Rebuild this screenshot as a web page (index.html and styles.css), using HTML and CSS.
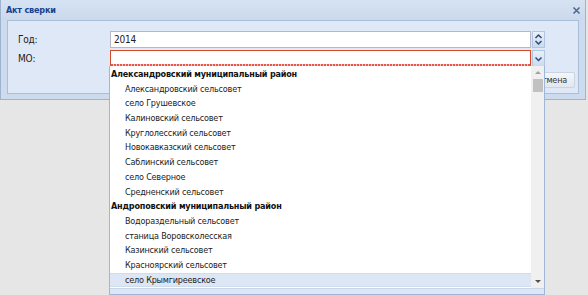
FILE: index.html
```html
<!DOCTYPE html>
<html>
<head>
<meta charset="utf-8">
<link rel="stylesheet" href="styles.css">
</head>
<body>
<div class="window">
  <div class="titlebar">
    <span class="title">Акт сверки</span>
    <svg class="close" width="9" height="9" viewBox="0 0 9 9"><path d="M1.5 1.5 L7.5 7.5 M7.5 1.5 L1.5 7.5" stroke="#4a6a94" stroke-width="1.6"/></svg>
  </div>
  <div class="panel">
    <div class="form">
      <div class="row">
        <label class="lbl">Год:</label>
        <div class="field"><div class="input">2014</div>
          <div class="trigger spin">
            <svg width="9" height="13" viewBox="0 0 9 13"><path d="M1.5 5 L4.5 2 L7.5 5" fill="none" stroke="#2d4b75" stroke-width="1.5"/><path d="M1.5 8 L4.5 11 L7.5 8" fill="none" stroke="#2d4b75" stroke-width="1.5"/></svg>
          </div>
        </div>
      </div>
      <div class="row">
        <label class="lbl">МО:</label>
        <div class="field"><div class="input invalid"></div>
          <div class="trigger">
            <svg width="9" height="8" viewBox="0 0 9 8"><path d="M1.5 2.5 L4.5 5.5 L7.5 2.5" fill="none" stroke="#2d4b75" stroke-width="1.5"/></svg>
          </div>
        </div>
      </div>
    </div>
    <div class="footer">
      <button class="btn">Отмена</button>
    </div>
  </div>
</div>

<div class="dropdown">
  <div class="list">
    <div class="items">
      <div class="grp">Александровский муниципальный район</div>
      <div class="item">Александровский сельсовет</div>
      <div class="item">село Грушевское</div>
      <div class="item">Калиновский сельсовет</div>
      <div class="item">Круглолесский сельсовет</div>
      <div class="item">Новокавказский сельсовет</div>
      <div class="item">Саблинский сельсовет</div>
      <div class="item">село Северное</div>
      <div class="item">Средненский сельсовет</div>
      <div class="grp">Андроповский муниципальный район</div>
      <div class="item">Водораздельный сельсовет</div>
      <div class="item">станица Воровсколесская</div>
      <div class="item">Казинский сельсовет</div>
      <div class="item">Красноярский сельсовет</div>
      <div class="item sel">село Крымгиреевское</div>
    </div>
    <div class="scrollbar">
      <div class="arrow up"></div>
      <div class="thumb"></div>
      <div class="track"></div>
      <div class="arrow down"></div>
    </div>
  </div>
  <div class="handle"><span class="grip"></span></div>
</div>
</body>
</html>
```
FILE: styles.css
```css
html, body {
  margin: 0;
  padding: 0;
}
body {
  width: 588px;
  height: 295px;
  background: #e6e6e6;
  font-family: "DejaVu Sans Condensed", "DejaVu Sans", sans-serif;
  font-size: 9px;
  letter-spacing: -0.2px;
  color: #222;
  position: relative;
  overflow: hidden;
}
.window {
  width: 584px;
  margin-left: 0;
  border: 1px solid #9fb3cc;
  border-top: none;
  background: #cddbee;
  padding-bottom: 5px;
}
.titlebar {
  height: 20px;
  display: flex;
  align-items: center;
  justify-content: space-between;
  padding: 0 4px 0 5px;
  background: linear-gradient(#d6e3f3, #cbd9ec);
}
.title {
  font-weight: bold;
  color: #15428b;
}
.close {
  display: block;
  margin-top: 1px;
}
.panel {
  margin: 0 6px;
  background: #dfe8f6;
  border: 1px solid #a9bfd9;
  height: 74px;
  box-sizing: border-box;
  display: flex;
  flex-direction: column;
}
.form {
  padding: 10px 0 0 10px;
  display: flex;
  flex-direction: column;
  gap: 2px;
}
.row {
  display: flex;
  align-items: center;
  height: 17px;
}
.lbl {
  width: 92px;
  color: #222;
  font-size: 10px;
}
.field {
  display: flex;
  height: 17px;
}
.input {
  width: 421px;
  height: 17px;
  box-sizing: border-box;
  border: 1px solid #b5b8c8;
  background: #fff;
  padding: 2px 3px;
  line-height: 12px;
  font-size: 10px;
  color: #222;
}
.input.invalid {
  border-color: #d64a2a;
  background:
    repeating-linear-gradient(90deg, #e8584a 0 2px, #f9c7bf 2px 3px) bottom / 100% 2px no-repeat,
    #fff;
}
.trigger {
  width: 13px;
  height: 17px;
  margin-left: 1px;
  box-sizing: border-box;
  border: 1px solid #b2c6df;
  background: linear-gradient(#e9f0fa, #c9dbf0);
  display: flex;
  align-items: center;
  justify-content: center;
}
.footer {
  display: flex;
  justify-content: flex-end;
  padding: 5px 3px 0 0;
}
.btn {
  font-family: inherit;
  font-size: 9px;
  letter-spacing: -0.2px;
  color: #333;
  height: 16px;
  padding: 0 7px;
  border: 1px solid #c9d4e2;
  border-radius: 2px;
  background: linear-gradient(#f4f6f9, #e2e7ee);
}

.dropdown {
  position: absolute;
  left: 109px;
  top: 66px;
  width: 436px;
  height: 229px;
  box-sizing: border-box;
  border: 1px solid #9fb6d6;
  border-top: none;
  background: #fff;
  display: flex;
  flex-direction: column;
}
.list {
  display: flex;
  flex: 1;
  min-height: 0;
}
.items {
  flex: 1;
  padding-top: 1px;
}
.grp, .item {
  height: 14.7px;
  line-height: 14.7px;
  white-space: nowrap;
  color: #222;
}
.grp {
  font-weight: bold;
  padding-left: 1px;
  color: #111;
}
.item {
  padding-left: 15px;
}
.item.sel {
  background: #dce6f4;
  border-top: 1px solid #cfdced;
  border-bottom: 1px solid #cfdced;
  box-sizing: border-box;
  line-height: 12.7px;
}
.scrollbar {
  width: 13px;
  background: #f0f0f0;
  display: flex;
  flex-direction: column;
  align-items: center;
}
.arrow {
  width: 0;
  height: 0;
  border-left: 3px solid transparent;
  border-right: 3px solid transparent;
}
.arrow.up {
  margin-top: 5px;
  border-bottom: 3px solid #a0a0a0;
}
.arrow.down {
  margin-bottom: 5px;
  border-top: 3px solid #505050;
}
.thumb {
  margin-top: 5px;
  width: 10px;
  height: 13px;
  background: #c1c1c1;
}
.track {
  flex: 1;
}
.handle {
  height: 5px;
  border-top: 1px solid #c8d6ea;
  background: #dce6f4;
  display: flex;
  justify-content: flex-end;
}
.grip {
  width: 4px;
  height: 4px;
  margin: 0 2px 0 0;
  background: radial-gradient(circle, #9fb3cc 40%, transparent 45%) 0 0 / 2px 2px;
}
```
